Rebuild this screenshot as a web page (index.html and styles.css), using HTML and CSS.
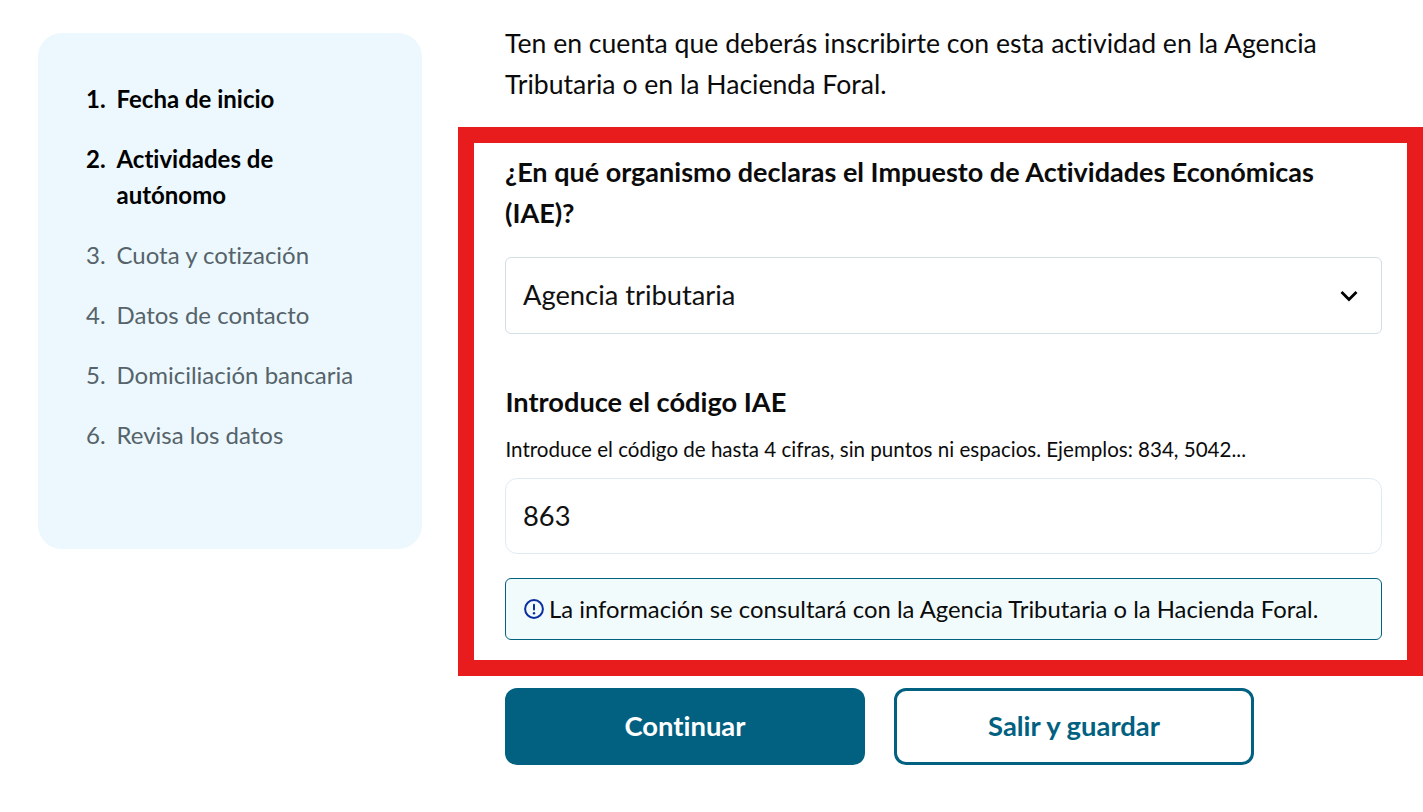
FILE: index.html
```html
<!DOCTYPE html>
<html lang="es">
<head>
<meta charset="utf-8">
<title>Actividades de autónomo</title>
<link rel="stylesheet" href="styles.css">
</head>
<body>
<div class="page">
  <aside class="side">
    <ol class="steps">
      <li class="step done"><span class="num">1.</span><span>Fecha de inicio</span></li>
      <li class="step done"><span class="num">2.</span><span>Actividades de autónomo</span></li>
      <li class="step"><span class="num">3.</span><span>Cuota y cotización</span></li>
      <li class="step"><span class="num">4.</span><span>Datos de contacto</span></li>
      <li class="step"><span class="num">5.</span><span>Domiciliación bancaria</span></li>
      <li class="step"><span class="num">6.</span><span>Revisa los datos</span></li>
    </ol>
  </aside>
  <main class="main">
    <p class="intro">Ten en cuenta que deberás inscribirte con esta actividad en la Agencia Tributaria o en la Hacienda Foral.</p>
    <section class="form">
      <div class="highlight"></div>
      <h2 class="q">¿En qué organismo declaras el Impuesto de Actividades Económicas (IAE)?</h2>
      <div class="field select">
        <span>Agencia tributaria</span>
        <svg class="chev" viewBox="0 0 18 12" width="18" height="12"><path d="M1.5 2 L9 9.5 L16.5 2" fill="none" stroke="#000" stroke-width="2.8"/></svg>
      </div>
      <h3 class="label">Introduce el código IAE</h3>
      <p class="hint">Introduce el código de hasta 4 cifras, sin puntos ni espacios. Ejemplos: 834, 5042...</p>
      <div class="field input">863</div>
      <div class="notice">
        <svg class="info" viewBox="0 0 20 20" width="20" height="20"><circle cx="10" cy="10" r="8.9" fill="none" stroke="#0b2fa0" stroke-width="2"/><rect x="9" y="4.8" width="2" height="6.8" rx="1" fill="#0b2fa0"/><circle cx="10" cy="14.2" r="1.2" fill="#0b2fa0"/></svg>
        <span>La información se consultará con la Agencia Tributaria o la Hacienda Foral.</span>
      </div>
    </section>
    <div class="actions">
      <button class="btn primary">Continuar</button>
      <button class="btn secondary">Salir y guardar</button>
    </div>
  </main>
</div>
</body>
</html>
```
FILE: styles.css
```css
* { box-sizing: border-box; }
html, body { margin: 0; height: 100%; overflow: hidden; background: #fff; }
body { font-family: Lato, "Open Sans", sans-serif; color: #0b0b0b; font-variant-ligatures: none; }
.page { display: flex; align-items: flex-start; padding: 33px 41px 0 38px; gap: 83px; }
.side { flex: 0 0 384px; height: 516px; background: #ecf8fd; border-radius: 24px; padding: 48px 48px 0; }
.steps { list-style: none; margin: 0; padding: 0; display: flex; flex-direction: column; gap: 24px; }
.step { display: flex; font-size: 24px; line-height: 36px; color: #56636a; }
.step.done { color: #000; font-weight: 700; }
.num { flex: 0 0 30.5px; }
.main { flex: 1; min-width: 0; }
.intro { margin: -10px 0 0; font-size: 26.6px; line-height: 41px; color: #0b0b0b; }
.form { position: relative; margin-top: 46px; }
.highlight { position: absolute; top: -24px; left: -47px; right: -41px; height: 549px; border: 16px solid #e81c1c; pointer-events: none; }
.q { margin: 0; font-size: 27px; line-height: 41px; font-weight: 700; }
.field { display: flex; align-items: center; background: #fff; padding: 0 17px 2px; font-size: 27.3px; color: #111; }
.select { justify-content: space-between; height: 77px; margin-top: 24px; border: 1px solid #d3dfe5; border-radius: 6px; padding-right: 23.5px; }
.chev { margin-top: 2px; }
.label { margin: 47px 0 0 .5px; font-size: 27.2px; line-height: 41px; font-weight: 700; }
.hint { margin: 12px 0 0 .5px; font-size: 20.55px; line-height: 30px; }
.input { height: 76px; margin-top: 14px; border: 1px solid #dfebf2; border-radius: 12px; }
.notice { display: flex; align-items: center; gap: 5px; height: 62px; margin-top: 24px; padding: 0 18px 2px; background: #f2fbfc; border: 1px solid #04607f; border-radius: 6px; font-size: 23.85px; }
.info { flex: none; margin-top: 2px; }
.actions { display: flex; gap: 29px; margin-top: 48px; }
.btn { width: 360px; height: 77px; padding: 0 0 2px; border-radius: 12px; font: 700 27.4px Lato, sans-serif; font-variant-ligatures: none; }
.primary { background: #026181; border: 0; color: #fff; }
.secondary { background: #fff; border: 3px solid #026181; color: #026181; }
```
